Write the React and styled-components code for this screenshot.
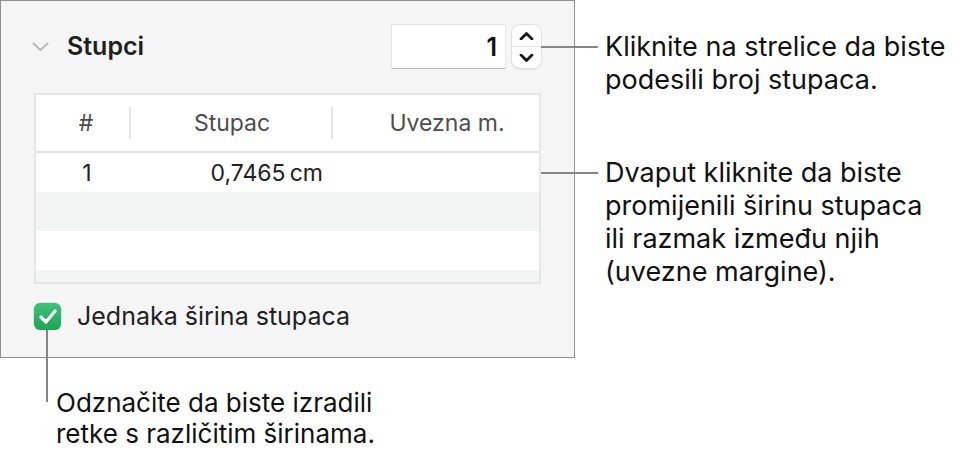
import React from "react";
import styled, { createGlobalStyle } from "styled-components";

const GlobalStyle = createGlobalStyle`
  html, body { margin: 0; padding: 0; background: #ffffff; }
  body {
    font-family: Inter, "Noto Sans", "Liberation Sans", sans-serif;
    color: #1d1d1f;
    -webkit-font-smoothing: antialiased;
  }
  * { box-sizing: border-box; }
`;

const Page = styled.div`
  width: 968px;
  height: 463px;
  display: flex;
  align-items: flex-start;
  overflow: hidden;
`;

const LeftColumn = styled.div`
  flex: none;
  width: 575px;
  display: flex;
  flex-direction: column;
`;

const Panel = styled.section`
  width: 575px;
  height: 358px;
  background: #f5f5f5;
  border: 1px solid #909090;
  padding: 24px 33px 0 33px;
  display: flex;
  flex-direction: column;
`;

const Header = styled.div`
  display: flex;
  align-items: center;
  height: 43px;
`;

const Disclosure = styled.svg`
  width: 17px;
  height: 10px;
  margin-left: -2px;
  margin-right: 18px;
  flex: none;
`;

const Title = styled.h2`
  margin: 0;
  font-size: 25px;
  font-weight: 600;
  color: #1f1f1f;
  flex: 1;
  margin-top: -2px;
`;

const NumberField = styled.div`
  width: 113px;
  height: 43px;
  background: #ffffff;
  box-shadow: 0 1px 0 #b9b9b9, 0 0 0 1px #e6e6e6;
  display: flex;
  align-items: center;
  justify-content: flex-end;
  padding-right: 8px;
  font-size: 25px;
  font-weight: 600;
  color: #111;
`;

const Stepper = styled.div`
  width: 29px;
  height: 43px;
  margin-left: 7px;
  border-radius: 8px;
  background: #ffffff;
  box-shadow: 0 0 0 1px #e2e2e2, 0 1px 2px rgba(0, 0, 0, 0.18);
  display: flex;
  flex-direction: column;
  overflow: hidden;
`;

const StepHalf = styled.div`
  flex: 1;
  display: flex;
  align-items: center;
  justify-content: center;
  border-top: ${(p) => (p.$lower ? "1px solid #e2e2e2" : "none")};
`;

const Table = styled.div`
  margin-top: 25px;
  height: 191px;
  border: 2px solid #e6e6e6;
  background: #ffffff;
  overflow: hidden;
  display: flex;
  flex-direction: column;
`;

const HeadRow = styled.div`
  flex: none;
  height: 58px;
  border-bottom: 2px solid #e6e6e6;
  display: grid;
  grid-template-columns: 93px 202px 1fr;
  align-items: center;
  font-size: 23px;
  color: #4d4d4d;
`;

const HeadCell = styled.div`
  height: 32px;
  display: flex;
  align-items: center;
  justify-content: ${(p) => p.$align || "center"};
  padding-left: ${(p) => p.$pl || 0}px;
  padding-right: ${(p) => p.$pr || 0}px;
  border-left: ${(p) => (p.$sep ? "2px solid #e6e6e6" : "none")};
`;

const BodyRow = styled.div`
  flex: none;
  height: 39px;
  display: grid;
  grid-template-columns: 93px 202px 1fr;
  align-items: center;
  background: ${(p) => (p.$alt ? "#f3f4f4" : "#ffffff")};
  font-size: 23px;
  color: #222;
`;

const Cell = styled.div`
  display: flex;
  justify-content: ${(p) => p.$align || "center"};
  padding-left: ${(p) => p.$pl || 0}px;
  padding-right: ${(p) => p.$pr || 0}px;
`;

const CheckRow = styled.label`
  margin-top: 17px;
  display: flex;
  align-items: center;
  gap: 16px;
  font-size: 25px;
  color: #1f1f1f;
`;

const CheckBox = styled.span`
  width: 27px;
  height: 27px;
  border-radius: 6px;
  background: linear-gradient(#3cc375, #1fa456);
  box-shadow: 0 0 0 0.5px rgba(0, 0, 0, 0.15);
  display: flex;
  align-items: center;
  justify-content: center;
  flex: none;
`;

const RightColumn = styled.div`
  flex: none;
  margin-left: 30px;
  display: flex;
  flex-direction: column;
`;

const Callout = styled.p`
  position: relative;
  margin: ${(p) => p.$mt}px 0 0 0;
  font-size: 27px;
  line-height: 33px;
  color: #111;
  white-space: nowrap;
  &::before {
    content: "";
    position: absolute;
    left: -64px;
    top: 16px;
    width: 57px;
    height: 2px;
    background: #868686;
  }
`;

const BottomCallout = styled.p`
  position: relative;
  margin: 29px 0 0 56px;
  font-size: 26px;
  line-height: 31px;
  color: #111;
  white-space: nowrap;
  &::before {
    content: "";
    position: absolute;
    left: -10px;
    top: -57px;
    width: 2px;
    height: 72px;
    background: #868686;
  }
`;

const Chevron = ({ up }) => (
  <svg width="15" height="8" viewBox="0 0 15 8">
    <path
      d={up ? "M2 7 L7.5 1.5 L13 7" : "M2 1 L7.5 6.5 L13 1"}
      fill="none"
      stroke="#111"
      strokeWidth="2.7"
      strokeLinecap="round"
      strokeLinejoin="round"
    />
  </svg>
);

export default function App() {
  return (
    <>
      <GlobalStyle />
      <Page>
        <LeftColumn>
          <Panel>
            <Header>
              <Disclosure viewBox="0 0 17 10">
                <path
                  d="M1.5 1.5 L8.5 8 L15.5 1.5"
                  fill="none"
                  stroke="#b8b8b8"
                  strokeWidth="2"
                  strokeLinecap="round"
                  strokeLinejoin="round"
                />
              </Disclosure>
              <Title>Stupci</Title>
              <NumberField>1</NumberField>
              <Stepper>
                <StepHalf>
                  <Chevron up />
                </StepHalf>
                <StepHalf $lower>
                  <Chevron />
                </StepHalf>
              </Stepper>
            </Header>
            <Table>
              <HeadRow>
                <HeadCell $pl={7}>#</HeadCell>
                <HeadCell $sep $pl={2}>Stupac</HeadCell>
                <HeadCell $sep $pl={22}>Uvezna m.</HeadCell>
              </HeadRow>
              <BodyRow>
                <Cell $pl={9}>1</Cell>
                <Cell $align="flex-end" $pr={8}>0,7465{"\u202F"}cm</Cell>
                <Cell />
              </BodyRow>
              <BodyRow $alt />
              <BodyRow />
              <BodyRow $alt />
            </Table>
            <CheckRow>
              <CheckBox>
                <svg width="18" height="15" viewBox="0 0 18 15">
                  <path
                    d="M2 8 L7 13 L16 2"
                    fill="none"
                    stroke="#ffffff"
                    strokeWidth="3.2"
                    strokeLinecap="round"
                    strokeLinejoin="round"
                  />
                </svg>
              </CheckBox>
              Jednaka širina stupaca
            </CheckRow>
          </Panel>
          <BottomCallout>
            Odznačite da biste izradili
            <br />
            retke s različitim širinama.
          </BottomCallout>
        </LeftColumn>
        <RightColumn>
          <Callout $mt={30}>
            Kliknite na strelice da biste
            <br />
            podesili broj stupaca.
          </Callout>
          <Callout $mt={60}>
            Dvaput kliknite da biste
            <br />
            promijenili širinu stupaca
            <br />
            ili razmak između njih
            <br />
            (uvezne margine).
          </Callout>
        </RightColumn>
      </Page>
    </>
  );
}
